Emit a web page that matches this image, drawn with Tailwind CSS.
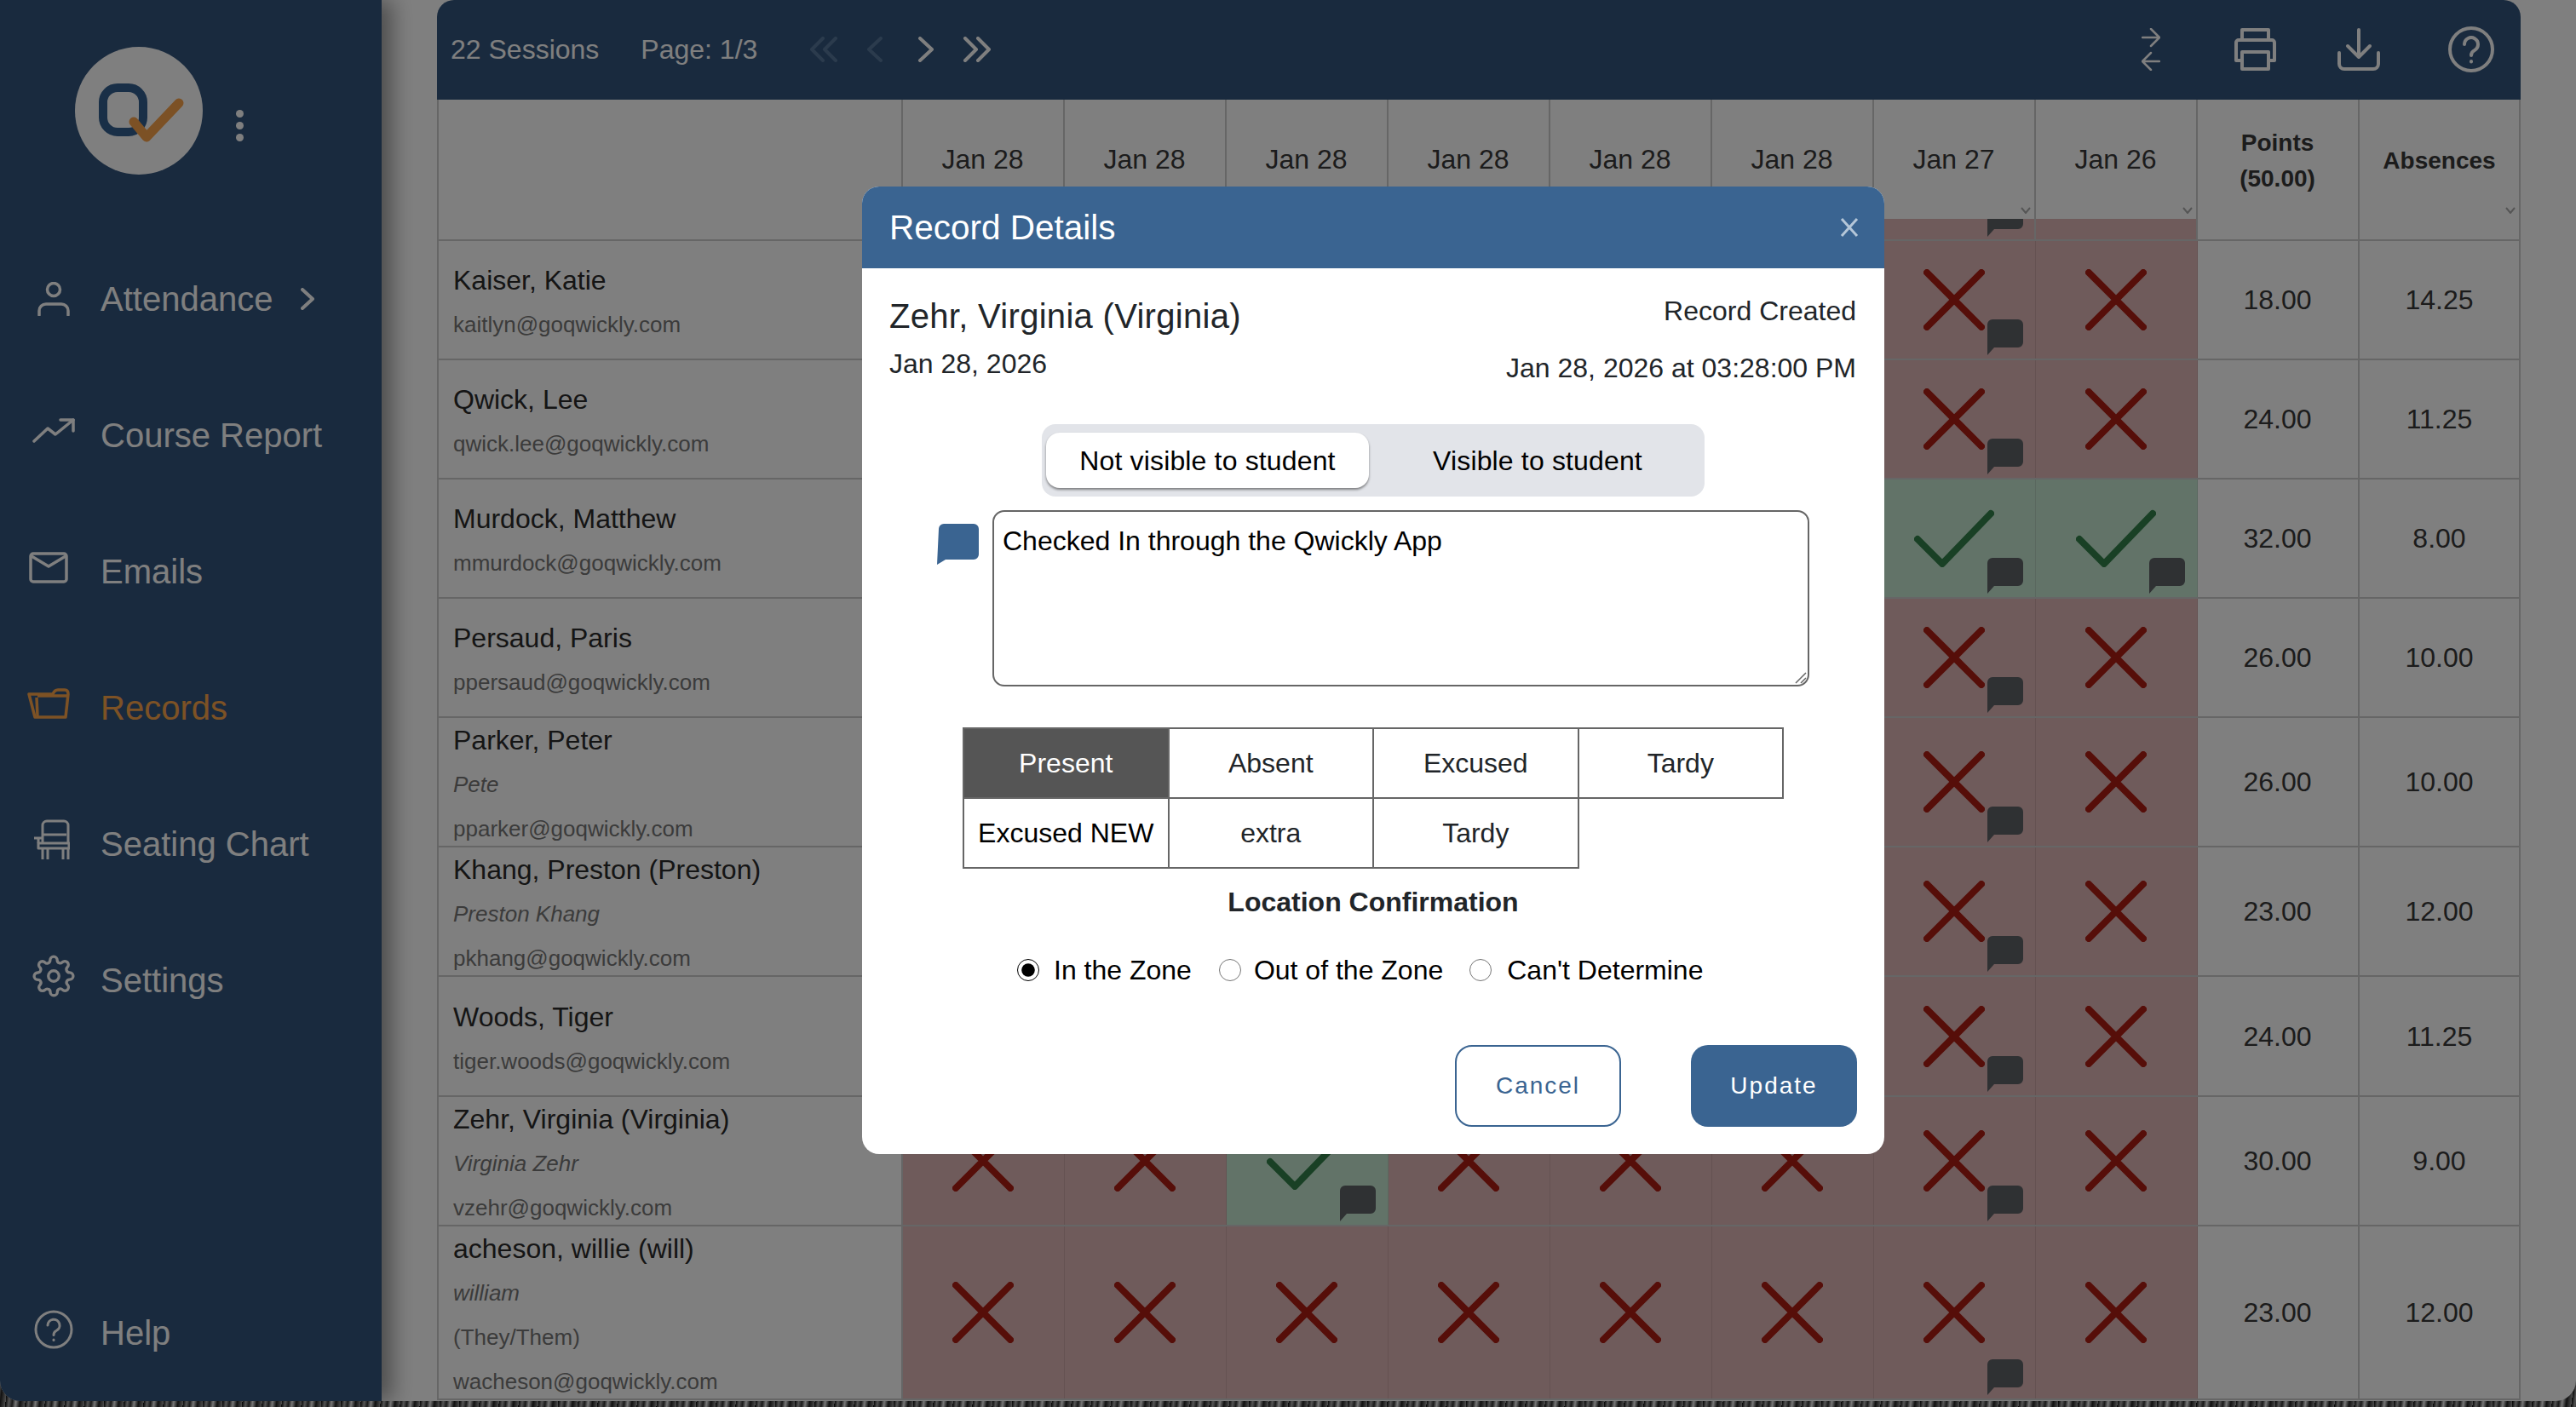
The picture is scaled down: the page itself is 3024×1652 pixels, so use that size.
<!doctype html>
<html><head><meta charset="utf-8">
<script src="https://cdn.jsdelivr.net/npm/@tailwindcss/browser@4"></script>
</head>
<body class="m-0">
<div class="relative w-[3024px] h-[1652px] overflow-hidden font-['Liberation_Sans',Arial,sans-serif] bg-[repeating-linear-gradient(97deg,#111_0px,#aaa_4px,#333_8px,#eee_12px,#222_17px,#999_23px)]">
  <div class="flex w-[3024px] h-[1645px] bg-white rounded-b-[24px] overflow-hidden">
    <!-- sidebar -->
    <aside class="relative z-10 w-[448px] shrink-0 h-full flex flex-col bg-[#33547c] text-white text-[40px] shadow-[12px_0_24px_rgba(0,0,0,0.4)]">
      <div class="h-[271px] flex items-start pt-[55px] pl-[88px]">
        <div class="w-[150px] h-[150px] rounded-full bg-white">
          <svg width="150" height="150" viewBox="0 0 150 150" fill="none"><rect x="33" y="48" width="47" height="52" rx="17" stroke="#335f8e" stroke-width="10"/><path d="M69 88 84 106 122 66" stroke="#f8a24a" stroke-width="11" stroke-linecap="round" stroke-linejoin="round"/></svg>
        </div>
        <div class="ml-[39px] mt-[74px] flex flex-col gap-[5px]">
          <span class="block w-[9px] h-[9px] rounded-full bg-white"></span><span class="block w-[9px] h-[9px] rounded-full bg-white"></span><span class="block w-[9px] h-[9px] rounded-full bg-white"></span>
        </div>
      </div>
      <div class="h-[160px] flex items-center">
        <svg class="ml-[44px] mr-[36px]" width="38" height="40" viewBox="0 0 38 40" fill="none" stroke="white" stroke-width="3.5" stroke-linecap="round"><circle cx="19" cy="9" r="7.5"/><path d="M2 39v-5a8 8 0 0 1 8-8h18a8 8 0 0 1 8 8v5"/></svg>
        <span>Attendance</span>
        <svg class="ml-[33px]" width="16" height="26" viewBox="0 0 16 26" fill="none" stroke="white" stroke-width="4" stroke-linecap="round" stroke-linejoin="round"><path d="M2 2 14 13 2 24"/></svg>
      </div>
      <div class="h-[160px] flex items-center">
        <svg class="ml-[38px] mr-[30px] mb-[12px]" width="50" height="30" viewBox="0 0 50 30" fill="none" stroke="white" stroke-width="3.5" stroke-linecap="round" stroke-linejoin="round"><path d="M2 28 18 13 27 20 48 3"/><path d="M33 3H48V16"/></svg>
        <span>Course Report</span>
      </div>
      <div class="h-[160px] flex items-center">
        <svg class="ml-[34px] mr-[38px] mb-[10px]" width="46" height="37" viewBox="0 0 46 37" fill="none" stroke="white" stroke-width="3.5" stroke-linejoin="round"><rect x="2" y="2" width="42" height="33" rx="3"/><path d="M3 5 23 17 43 5"/></svg>
        <span>Emails</span>
      </div>
      <div class="h-[160px] flex items-center text-[#faa44a]">
        <svg class="ml-[32px] mr-[36px] mb-[10px]" width="50" height="36" viewBox="0 0 50 36" fill="none" stroke="#faa44a" stroke-width="3.5" stroke-linejoin="round"><path d="M2 7H30Q32 2 36 2H44Q48 2 48 7L45 34H9Z"/><path d="M12 33 11 11"/><path d="M12 9H47"/></svg>
        <span>Records</span>
      </div>
      <div class="h-[160px] flex items-center">
        <svg class="ml-[39px] mr-[36px] mb-[10px]" width="43" height="48" viewBox="0 0 43 48" fill="none" stroke="white" stroke-width="3" stroke-linejoin="round"><path d="M11 27V7a5 5 0 0 1 5-5h20a5 5 0 0 1 5 5v20"/><path d="M11 18H39"/><path d="M1 22H11M6 22v6"/><path d="M6 28H42V34H6Z"/><path d="M11 34V47M17 34V47M35 34V47M41 34V47"/></svg>
        <span>Seating Chart</span>
      </div>
      <div class="h-[160px] flex items-center">
        <svg class="ml-[38px] mr-[30px] mb-[10px]" width="50" height="50" viewBox="0 0 24 24" fill="none" stroke="white" stroke-width="1.6" stroke-linecap="round" stroke-linejoin="round"><circle cx="12" cy="12" r="3"/><path d="M19.4 15a1.65 1.65 0 0 0 .33 1.82l.06.06a2 2 0 0 1 0 2.83 2 2 0 0 1-2.83 0l-.06-.06a1.65 1.65 0 0 0-1.82-.33 1.65 1.65 0 0 0-1 1.51V21a2 2 0 0 1-2 2 2 2 0 0 1-2-2v-.09A1.65 1.65 0 0 0 9 19.4a1.65 1.65 0 0 0-1.82.33l-.06.06a2 2 0 0 1-2.83 0 2 2 0 0 1 0-2.83l.06-.06a1.65 1.65 0 0 0 .33-1.82 1.65 1.65 0 0 0-1.51-1H3a2 2 0 0 1-2-2 2 2 0 0 1 2-2h.09A1.65 1.65 0 0 0 4.6 9a1.65 1.65 0 0 0-.33-1.82l-.06-.06a2 2 0 0 1 0-2.83 2 2 0 0 1 2.83 0l.06.06a1.65 1.65 0 0 0 1.82.33H9a1.65 1.65 0 0 0 1-1.51V3a2 2 0 0 1 2-2 2 2 0 0 1 2 2v.09a1.65 1.65 0 0 0 1 1.51 1.65 1.65 0 0 0 1.82-.33l.06-.06a2 2 0 0 1 2.83 0 2 2 0 0 1 0 2.83l-.06.06a1.65 1.65 0 0 0-.33 1.82V9a1.65 1.65 0 0 0 1.51 1H21a2 2 0 0 1 2 2 2 2 0 0 1-2 2h-.09a1.65 1.65 0 0 0-1.51 1z"/></svg>
        <span>Settings</span>
      </div>
      <div class="mt-auto h-[160px] flex items-center">
        <svg class="ml-[40px] mr-[32px] mb-[8px]" width="46" height="46" viewBox="0 0 46 46" fill="none" stroke="white" stroke-width="3" stroke-linecap="round"><circle cx="23" cy="23" r="21"/><path d="M16 18a7 7 0 1 1 10 6.5c-2 1-3 2.5-3 5"/><path d="M23 35v.5"/></svg>
        <span>Help</span>
      </div>
    </aside>

    <!-- main -->
    <main class="ml-[65px] w-[2446px] shrink-0 flex flex-col">
      <div class="h-[117px] shrink-0 flex items-center rounded-t-[20px] bg-[#33547c] text-white text-[32px] pl-[16px] pr-[31px] pb-[2px]">
        <span>22 Sessions</span>
        <span class="ml-[49px]">Page: 1/3</span>
        <svg class="ml-[61px]" width="34" height="30" viewBox="0 0 34 30" fill="none" stroke="#56779a" stroke-width="4" stroke-linecap="round" stroke-linejoin="round"><path d="M16 2 3 15 16 28M31 2 18 15 31 28"/></svg>
        <svg class="ml-[33px]" width="20" height="30" viewBox="0 0 20 30" fill="none" stroke="#56779a" stroke-width="4" stroke-linecap="round" stroke-linejoin="round"><path d="M17 2 3 15 17 28"/></svg>
        <svg class="ml-[40px]" width="20" height="30" viewBox="0 0 20 30" fill="none" stroke="white" stroke-width="4" stroke-linecap="round" stroke-linejoin="round"><path d="M3 2 17 15 3 28"/></svg>
        <svg class="ml-[33px]" width="34" height="30" viewBox="0 0 34 30" fill="none" stroke="white" stroke-width="4" stroke-linecap="round" stroke-linejoin="round"><path d="M3 2 16 15 3 28M18 2 31 15 18 28"/></svg>
        <svg class="ml-auto" width="22" height="50" viewBox="0 0 22 50" fill="none" stroke="white" stroke-width="2.5" stroke-linecap="round" stroke-linejoin="round"><path d="M1 11H21M11 1 21 11 11 21"/><path d="M21 39H1M11 29 1 39 11 49"/></svg>
        <svg class="ml-[87px]" width="49" height="50" viewBox="0 0 49 50" fill="none" stroke="white" stroke-width="4" stroke-linejoin="round"><path d="M9 15V2H40V15"/><path d="M9 38H2V17a3 3 0 0 1 3-3H44a3 3 0 0 1 3 3V38H40"/><rect x="9" y="28" width="31" height="20"/></svg>
        <svg class="ml-[72px]" width="50" height="50" viewBox="0 0 50 50" fill="none" stroke="white" stroke-width="4" stroke-linecap="round" stroke-linejoin="round"><path d="M25 2V34M12 21 25 34 38 21"/><path d="M2 29V42a6 6 0 0 0 6 6H42a6 6 0 0 0 6-6V29"/></svg>
        <svg class="ml-[80px]" width="54" height="54" viewBox="0 0 54 54" fill="none" stroke="white" stroke-width="4" stroke-linecap="round"><circle cx="27" cy="27" r="25"/><path d="M19 21a8 8 0 1 1 12 7c-3 1.500-4 3-4 6"/><path d="M27 41v.5"/></svg>
      </div>
      <div id="rows" class="flex flex-col"></div>
    </main>
  </div>

  <!-- dim layer -->
  <div class="absolute inset-0 z-20 bg-black/50"></div>

  <!-- modal -->
  <div class="absolute z-30 left-[1012px] top-[219px] w-[1200px] h-[1136px] rounded-[20px] bg-white overflow-hidden flex flex-col text-[#212529] text-[32px]">
    <div class="h-[96px] shrink-0 bg-[#3a6491] flex items-center justify-between pl-[32px] pr-[30px]">
      <span class="text-white text-[40.5px]">Record Details</span>
      <svg width="22" height="22" viewBox="0 0 22 22" fill="none" stroke="#b4c6d8" stroke-width="3"><path d="M2 1 20 21M20 1 2 21"/></svg>
    </div>
    <div class="h-[183px] shrink-0 flex justify-between pl-[32px] pr-[33px]">
      <div>
        <div class="mt-[32px] text-[40px] leading-[48px] tracking-[0.3px]">Zehr, Virginia (Virginia)</div>
        <div class="mt-[12px] leading-[40px]">Jan 28, 2026</div>
      </div>
      <div class="text-right">
        <div class="mt-[30px] leading-[40px]">Record Created</div>
        <div class="mt-[27px] leading-[40px]">Jan 28, 2026 at 03:28:00 PM</div>
      </div>
    </div>
    <div class="ml-[211px] w-[778px] h-[85px] shrink-0 rounded-[16px] bg-[#e2e4e9] flex items-center pl-[5px] text-black tracking-[0.15px]">
      <div class="w-[379px] h-[65px] rounded-[16px] bg-white shadow-[0_2px_3px_rgba(0,0,0,0.45)] flex items-center justify-center">Not visible to student</div>
      <div class="flex-1 text-center pl-[2px]">Visible to student</div>
    </div>
    <div class="mt-[16px] pl-[88px] flex items-start">
      <svg class="mt-[16px]" width="49" height="48" viewBox="0 0 49 48" fill="#3a6491"><path d="M8 0H43a6 6 0 0 1 6 6V36a6 6 0 0 1-6 6H10L0 48 2 6a6 6 0 0 1 6-6z"/></svg>
      <div class="relative ml-[16px] w-[959px] h-[207px]">
        <textarea class="block w-full h-full rounded-[14px] border-2 border-[#666] bg-white text-black pl-[10px] pt-[14px] leading-[40px] outline-none resize-none">Checked In through the Qwickly App</textarea>
        <svg class="absolute right-[3px] bottom-[3px]" width="14" height="14" viewBox="0 0 14 14" fill="none" stroke="#666" stroke-width="1.5"><path d="M1 13 13 1M7 13 13 7"/></svg>
      </div>
    </div>
    <table class="mt-[48px] ml-[118px] w-[964px] table-fixed border-collapse text-center">
      <tbody>
        <tr class="h-[82px]">
          <td class="border-2 border-[#666] bg-[#555] text-white">Present</td>
          <td class="border-2 border-[#666]">Absent</td>
          <td class="border-2 border-[#666]">Excused</td>
          <td class="border-2 border-[#666]">Tardy</td>
        </tr>
        <tr class="h-[82px]">
          <td class="border-2 border-[#666] text-black">Excused NEW</td>
          <td class="border-2 border-[#666]">extra</td>
          <td class="border-2 border-[#666]">Tardy</td>
        </tr>
      </tbody>
    </table>
    <div class="mt-[19px] text-center font-bold leading-[40px]">Location Confirmation</div>
    <div class="mt-[40px] pl-[182px] flex items-center leading-[40px] text-black">
      <input type="radio" name="zone" checked class="m-0 w-[26px] h-[26px] accent-black">
      <span class="ml-[17px]">In the Zone</span>
      <input type="radio" name="zone" class="m-0 ml-[32px] w-[26px] h-[26px] accent-black">
      <span class="ml-[15px]">Out of the Zone</span>
      <input type="radio" name="zone" class="m-0 ml-[31px] w-[26px] h-[26px] accent-black">
      <span class="ml-[18px]">Can't Determine</span>
    </div>
    <div class="mt-auto mb-[32px] pr-[32px] flex justify-end gap-[82px] text-[28px] tracking-[2px]">
      <button class="w-[195px] h-[96px] rounded-[20px] border-2 border-[#3a6491] text-[#3a6491] bg-white">Cancel</button>
      <button class="w-[195px] h-[96px] rounded-[20px] bg-[#3a6491] text-white">Update</button>
    </div>
  </div>
</div>

<script>
const bubble = (pos) => `<svg class="absolute ${pos}" width="42" height="42" viewBox="0 0 42 42" fill="#5e6266"><path d="M6 0H36a6 6 0 0 1 6 6V27a6 6 0 0 1-6 6H8L0 42V6a6 6 0 0 1 6-6z"/></svg>`;
const cross = `<svg width="72" height="72" viewBox="0 0 72 72" fill="none" stroke="#ac1c12" stroke-width="8" stroke-linecap="round"><path d="M4 4 68 68M68 4 4 68"/></svg>`;
const check = `<svg class="relative" width="94" height="68" viewBox="0 0 94 68" fill="none" stroke="#33804a" stroke-width="8" stroke-linecap="round" stroke-linejoin="round"><path d="M4 35 33 64 90 5"/></svg>`;
const chevron = (pos) => `<svg class="absolute ${pos}" width="12" height="8" viewBox="0 0 12 8" fill="none" stroke="#aaa" stroke-width="2"><path d="M1 1 6 7 11 1"/></svg>`;
const dates = ["Jan 28","Jan 28","Jan 28","Jan 28","Jan 28","Jan 28","Jan 27","Jan 26"];
const students = [
 {h:"h-[140px]", name:"Kaiser, Katie", email:"kaitlyn@goqwickly.com", p:"18.00", a:"14.25"},
 {h:"h-[140px]", name:"Qwick, Lee", email:"qwick.lee@goqwickly.com", p:"24.00", a:"11.25"},
 {h:"h-[140px]", name:"Murdock, Matthew", email:"mmurdock@goqwickly.com", p:"32.00", a:"8.00", green:[6,7], bub:[6,7]},
 {h:"h-[140px]", name:"Persaud, Paris", email:"ppersaud@goqwickly.com", p:"26.00", a:"10.00"},
 {h:"h-[152px]", name:"Parker, Peter", it:"Pete", email:"pparker@goqwickly.com", p:"26.00", a:"10.00"},
 {h:"h-[152px]", name:"Khang, Preston (Preston)", it:"Preston Khang", email:"pkhang@goqwickly.com", p:"23.00", a:"12.00"},
 {h:"h-[141px]", name:"Woods, Tiger", email:"tiger.woods@goqwickly.com", p:"24.00", a:"11.25"},
 {h:"h-[152px]", name:"Zehr, Virginia (Virginia)", it:"Virginia Zehr", email:"vzehr@goqwickly.com", p:"30.00", a:"9.00", green:[2], bub:[2,6]},
 {h:"h-[204px]", name:"acheson, willie (will)", it:"william", pro:"(They/Them)", email:"wacheson@goqwickly.com", p:"23.00", a:"12.00"},
];
const line = "leading-[52px] h-[52px] whitespace-nowrap shrink-0";
let html = `<div class="grid grid-cols-[547px_repeat(9,190px)_189px] grid-rows-[minmax(0,1fr)] h-[166px] border-b-2 border-[#ccc] text-[#383838] text-[32px]">
  <div class="border-l-2 border-r-2 border-[#ccc]"></div>`;
dates.forEach((d,i)=>{
  html += `<div class="relative flex flex-col border-r-2 border-[#ccc]">
    <div class="h-[140px] pr-[1px] flex items-center justify-center">${d}</div>
    <div class="relative flex-1 overflow-hidden bg-[#dfb6b6]">${i===6?bubble("right-[13px] bottom-[3px]"):""}</div>
    ${i>5?chevron("right-[4px] top-[126px]"):""}
  </div>`;
});
html += `<div class="border-r-2 border-[#ccc]"><div class="h-[142px] pt-[2px] pr-[1px] flex items-center justify-center text-center font-bold text-[28px] leading-[42px]"><span>Points<br>(50.00)</span></div></div>
  <div class="relative border-r-2 border-[#ccc]"><div class="h-[142px] pt-[2px] flex items-center justify-center font-bold text-[28px]">Absences</div>${chevron("right-[4px] top-[126px]")}</div>
</div>`;
students.forEach(s=>{
  html += `<div class="grid grid-cols-[547px_repeat(9,190px)_189px] grid-rows-[minmax(0,1fr)] ${s.h} border-b-2 border-[#ccc] text-[#383838] text-[32px]">
    <div class="min-h-0 border-l-2 border-r-2 border-[#ccc] pl-[17px] pt-[6px] flex flex-col justify-center">
      <div class="${line} text-[#2a2a2a]">${s.name}</div>
      ${s.it?`<div class="${line} italic text-[26px] text-[#777]">${s.it}</div>`:""}
      ${s.pro?`<div class="${line} text-[26px] text-[#777]">${s.pro}</div>`:""}
      <div class="${line} text-[26px] text-[#777]">${s.email}</div>
    </div>`;
  dates.forEach((d,i)=>{
    const g = s.green && s.green.includes(i);
    const b = s.bub ? s.bub.includes(i) : i===6;
    html += `<div class="relative flex items-center justify-center pr-[2px] border-r ${g?"bg-[#c4e6d0] border-[#b5d0be]":"bg-[#dfb6b6] border-[#caa4a4]"}">${g?check:cross}${b?bubble("right-[14px] bottom-[4px]"):""}</div>`;
  });
  html += `<div class="border-r-2 border-[#ccc] pr-[1px] flex items-center justify-center">${s.p}</div>
    <div class="border-r-2 border-[#ccc] flex items-center justify-center">${s.a}</div>
  </div>`;
});
document.getElementById("rows").innerHTML = html;
</script>
</body></html>
